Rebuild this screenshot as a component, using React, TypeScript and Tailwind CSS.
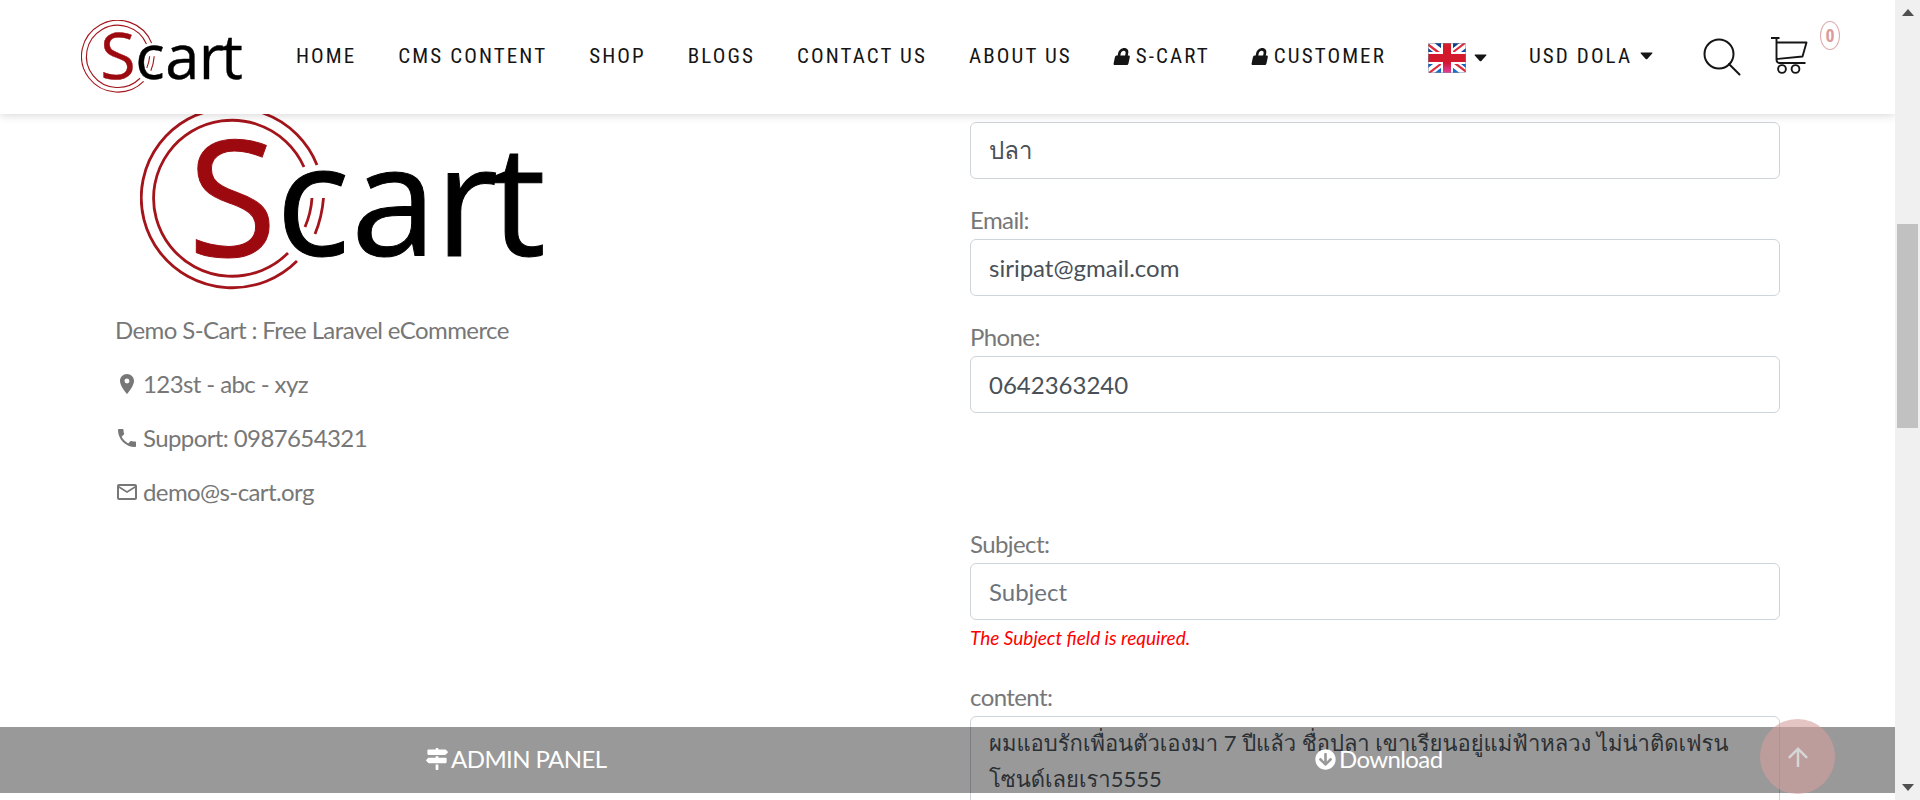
import React from "react";
import { FaArrowCircleDown, FaLock, FaMapSigns } from "react-icons/fa";
import {
  MdArrowUpward,
  MdLocationOn,
  MdMailOutline,
  MdPhone,
} from "react-icons/md";

function Logo({ className }: { className: string }) {
  return (
    <svg viewBox="-2 -3 406 186" className={className} role="img" aria-label="Scart">
      <g fill="none" stroke="#a3151b" strokeWidth="2.8">
        <path d="M175 55 A91 90 0 1 0 155 151" />
        <path d="M162 57 A78.5 78 0 1 0 146 143" />
        <path d="M170 88 Q169 103 163 117" />
        <path d="M181.500 88 Q180 107 173 124" />
      </g>
      <text
        x="46"
        y="145.500"
        fontSize="162"
        fill="#9c0a10"
        stroke="#9c0a10"
        strokeWidth="1"
        fontFamily="'Open Sans', 'Noto Sans', sans-serif"
      >
        S
      </text>
      <text
        x="134 209 293 349"
        y="145.500"
        fontSize="154"
        fill="#000"
        stroke="#000"
        strokeWidth="1"
        fontFamily="'Open Sans', 'Noto Sans', sans-serif"
      >
        cart
      </text>
    </svg>
  );
}

function UkFlag() {
  return (
    <svg viewBox="0 0 38 30" className="h-[30px] w-[38px]" aria-hidden="true">
      <defs>
        <linearGradient id="flag-blue" x1="0" y1="0" x2="0" y2="1">
          <stop offset="0" stopColor="#0b3a8a" />
          <stop offset="1" stopColor="#1c6fd0" />
        </linearGradient>
        <linearGradient id="flag-red" x1="0" y1="0" x2="0" y2="1">
          <stop offset="0" stopColor="#d8202c" />
          <stop offset="0.6" stopColor="#cf1026" />
          <stop offset="1" stopColor="#e2409a" />
        </linearGradient>
        <clipPath id="flag-clip">
          <rect width="38" height="30" rx="1.500" />
        </clipPath>
      </defs>
      <g clipPath="url(#flag-clip)">
        <rect width="38" height="30" fill="url(#flag-blue)" />
        <path d="M0 0 L38 30 M38 0 L0 30" stroke="#fff" strokeWidth="8" />
        <path
          d="M0 1.500 L14 12 M38 28.500 L24 18 M37 0 L24 10 M1 30 L14 20"
          stroke="#dc2a3c"
          strokeWidth="2.200"
        />
        <path d="M19 0 V30 M0 15 H38" stroke="#fff" strokeWidth="12" />
        <rect x="15" width="8" height="30" fill="url(#flag-red)" />
        <rect y="11" width="38" height="8" fill="#d21a2c" />
        <rect x="0.500" y="0.500" width="37" height="29" rx="1.500" fill="none" stroke="#7d8797" strokeOpacity="0.5" />
      </g>
    </svg>
  );
}

function Caret() {
  return (
    <svg viewBox="0 0 13 8" className="h-2 w-[13px]" fill="#151515" aria-hidden="true">
      <path d="M1.200 0.500 H11.800 Q13 0.500 12.200 1.600 L7.300 6.900 Q6.500 7.700 5.700 6.900 L0.800 1.600 Q0 0.500 1.200 0.500 Z" />
    </svg>
  );
}

function Header() {
  const links = ["HOME", "CMS CONTENT", "SHOP", "BLOGS", "CONTACT US", "ABOUT US"];
  const locked = ["S-CART", "CUSTOMER"];
  return (
    <header className="absolute inset-x-0 top-0 z-10 flex h-[114px] items-center bg-white pr-[55px] pl-[81px] shadow-[0_0_10px_rgba(0,0,0,0.2)]">
      <a href="#home" className="shrink-0">
        <Logo className="w-[162px]" />
      </a>
      <nav className="ml-[53px] flex items-center gap-[42px] pb-0.5 font-['Roboto_Condensed','Liberation_Sans_Narrow',sans-serif] text-[21px] leading-6 tracking-widest whitespace-nowrap text-[#151515]">
        {links.map((label) => (
          <a key={label} href="#nav">
            {label}
          </a>
        ))}
        {locked.map((label) => (
          <a key={label} href="#account" className="flex items-center gap-[5px]">
            <FaLock className="size-[17px] -skew-x-12" aria-hidden="true" />
            {label}
          </a>
        ))}
        <button type="button" aria-label="Language" className="flex items-center gap-2 pt-1">
          <UkFlag />
          <Caret />
        </button>
        <button type="button" className="flex items-center gap-2">
          USD DOLA
          <Caret />
        </button>
      </nav>
      <button type="button" aria-label="Search" className="ml-auto">
        <svg viewBox="0 0 38 38" className="size-[38px]" fill="none" stroke="#151515" strokeWidth="2" strokeLinecap="round" aria-hidden="true">
          <circle cx="16" cy="16" r="14.500" />
          <path d="M26 26 L36.500 36.500" />
        </svg>
      </button>
      <a href="#cart" aria-label="Cart" className="relative ml-[29px] mr-[32px] -mt-1">
        <svg viewBox="0 0 38 38" className="size-[38px]" fill="none" stroke="#151515" strokeWidth="1.900" strokeLinejoin="round" aria-hidden="true">
          <path d="M1 2 H9.500 M6.500 2 V23.500 Q6.500 27 10 27 H35.500" />
          <path d="M6.500 6.500 H36.500 L32.500 20.500 L6.500 23" />
          <circle cx="12" cy="33" r="3.900" />
          <circle cx="25.500" cy="33" r="3.900" />
        </svg>
        <span className="absolute -top-[15px] left-[50px] flex h-[29px] w-5 items-center justify-center rounded-[50%] border border-[#e0a9ab] font-['Roboto_Condensed','Liberation_Sans_Narrow',sans-serif] text-lg font-bold text-[#dc9a9d]">
          0
        </span>
      </a>
    </header>
  );
}

interface FieldProps {
  id: string;
  label: string;
  value?: string;
  placeholder?: string;
  type?: string;
}

function Field({ id, label, value, placeholder, type = "text" }: FieldProps) {
  return (
    <div>
      <label htmlFor={id} className="block h-9 text-2xl leading-[34px] tracking-tight text-[#777777]">
        {label}
      </label>
      <input
        id={id}
        type={type}
        defaultValue={value}
        placeholder={placeholder}
        className="block h-[57px] w-full rounded-md border border-[#ced4da] bg-white px-[18px] text-2xl text-[#495057] placeholder:text-[#6c757d]"
      />
    </div>
  );
}

function ContactForm() {
  return (
    <form className="-mt-[21px]">
      <Field id="name" label="Name:" value="ปลา" />
      <div className="mt-6">
        <Field id="email" label="Email:" type="email" value="siripat@gmail.com" />
      </div>
      <div className="mt-6">
        <Field id="phone" label="Phone:" value="0642363240" />
      </div>
      <div className="mt-[114px]">
        <Field id="subject" label="Subject:" placeholder="Subject" />
        <p className="h-9 text-[19px] leading-9 text-[#ff0000] italic">The Subject field is required.</p>
      </div>
      <div className="mt-6">
        <label htmlFor="content" className="block h-9 text-2xl leading-[34px] tracking-tight text-[#777777]">
          content:
        </label>
        <textarea
          id="content"
          rows={4}
          className="block w-full resize-none rounded-md border border-[#ced4da] bg-white px-[18px] py-2 text-[22px] leading-9 text-[#495057]"
          defaultValue={"ผมแอบรักเพื่อนตัวเองมา 7 ปีแล้ว ชื่อปลา เขาเรียนอยู่แม่ฟ้าหลวง ไม่น่าติดเฟรน\nโซนด์เลยเรา5555"}
        />
      </div>
    </form>
  );
}

function Scrollbar() {
  return (
    <div className="flex w-[25px] shrink-0 flex-col items-center bg-[#f0f0f0] py-[9px]" aria-hidden="true">
      <svg viewBox="0 0 12 7" className="h-[7px] w-3" fill="#505050">
        <path d="M6 0 L12 7 H0 Z" />
      </svg>
      <div className="flex w-full grow flex-col items-center">
        <div className="grow-[208]" />
        <div className="w-[21px] grow-[204] bg-[#c1c1c1]" />
        <div className="grow-[356]" />
      </div>
      <svg viewBox="0 0 12 7" className="h-[7px] w-3" fill="#505050">
        <path d="M0 0 H12 L6 7 Z" />
      </svg>
    </div>
  );
}

export default function App() {
  return (
    <div className="flex h-screen overflow-hidden bg-white font-[Lato,Loma,Waree,Garuda,'Noto_Sans_Thai',sans-serif]">
      <div className="relative min-w-0 grow overflow-hidden">
        <Header />
        <main className="grid grid-cols-2 gap-[45px] px-[115px] pt-[107px]">
          <section className="text-2xl leading-9 tracking-tight text-[#777777]">
            <Logo className="ml-[25px] w-[406px]" />
            <p className="mt-[19px]">Demo S-Cart : Free Laravel eCommerce</p>
            <p className="mt-[18px] flex items-center gap-1">
              <MdLocationOn aria-hidden="true" />
              123st - abc - xyz
            </p>
            <p className="mt-[18px] flex items-center gap-1">
              <MdPhone aria-hidden="true" />
              Support: 0987654321
            </p>
            <p className="mt-[18px] flex items-center gap-1">
              <MdMailOutline aria-hidden="true" />
              demo@s-cart.org
            </p>
          </section>
          <ContactForm />
        </main>
        <div className="absolute inset-x-0 bottom-[7px] grid h-[66px] grid-cols-2 items-center bg-black/40 px-[85px] pb-0.5 text-2xl tracking-tight text-white">
          <a href="#admin" className="flex items-center justify-center gap-[3px]">
            <FaMapSigns className="size-[22px]" aria-hidden="true" />
            ADMIN PANEL
          </a>
          <a href="#download" className="flex items-center justify-center gap-[3px]">
            <FaArrowCircleDown className="size-[21px]" aria-hidden="true" />
            Download
          </a>
        </div>
        <button
          type="button"
          aria-label="Back to top"
          className="absolute right-[60px] bottom-1.5 flex size-[75px] items-center justify-center rounded-full bg-[#d59e9e] text-[30px] text-white opacity-60"
        >
          <MdArrowUpward aria-hidden="true" />
        </button>
      </div>
      <Scrollbar />
    </div>
  );
}
